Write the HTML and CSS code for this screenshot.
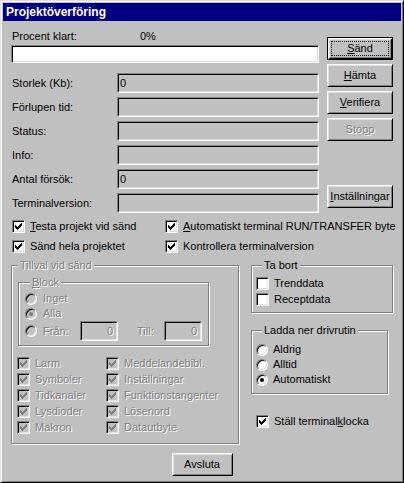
FILE: index.html
```html
<!DOCTYPE html>
<html lang="sv">
<head>
    <meta charset="UTF-8">
    <meta name="viewport" content="width=device-width, initial-scale=1.0">
    <title>Projektöverföring</title>
    <link rel="stylesheet" href="styles.css">
</head>
<body>
    <svg class="defs" width="0" height="0">
        <symbol id="tick" viewBox="0 0 7 7">
            <path d="M6 0h1v1H6zM5 1h2v1H5zM0 2h1v1H0zM4 2h3v1H4zM0 3h2v1H0zM3 3h3v1H3zM0 4h5v1H0zM1 5h3v1H1zM2 6h1v1H2z"/>
        </symbol>
    </svg>

    <div class="window">
        <div class="titlebar">Projektöverföring</div>

        <div class="content">
            <div class="top">
                <div class="main">
                    <div class="progress-head">
                        <span class="progress-label">Procent klart:</span>
                        <span>0%</span>
                    </div>
                    <div class="progress sunken"></div>

                    <div class="fields">
                        <span class="field-label">Storlek (Kb):</span>
                        <div class="field sunken">0</div>
                        <span class="field-label">Förlupen tid:</span>
                        <div class="field sunken"></div>
                        <span class="field-label">Status:</span>
                        <div class="field sunken"></div>
                        <span class="field-label">Info:</span>
                        <div class="field sunken"></div>
                        <span class="field-label">Antal försök:</span>
                        <div class="field sunken">0</div>
                        <span class="field-label">Terminalversion:</span>
                        <div class="field sunken"></div>
                    </div>
                </div>

                <div class="actions">
                    <button class="btn btn-default"><u>S</u>änd</button>
                    <button class="btn"><u>H</u>ämta</button>
                    <button class="btn"><u>V</u>erifiera</button>
                    <button class="btn" disabled>Sto<u>p</u>p</button>
                    <button class="btn btn-settings"><u>I</u>nställningar</button>
                </div>
            </div>

            <div class="options">
                <div class="check">
                    <span class="box sunken"><svg><use href="#tick"/></svg></span>
                    <span><u>T</u>esta projekt vid sänd</span>
                </div>
                <div class="check">
                    <span class="box sunken"><svg><use href="#tick"/></svg></span>
                    <span><u>A</u>utomatiskt terminal RUN/TRANSFER byte</span>
                </div>
                <div class="check">
                    <span class="box sunken"><svg><use href="#tick"/></svg></span>
                    <span>Sänd hela projektet</span>
                </div>
                <div class="check">
                    <span class="box sunken"><svg><use href="#tick"/></svg></span>
                    <span>Kontrollera terminalversion</span>
                </div>
            </div>

            <div class="lower">
                <fieldset class="group tillval disabled">
                    <legend>Tillval vid sänd</legend>

                    <fieldset class="group block">
                        <legend><u>B</u>lock</legend>
                        <div class="radio-row">
                            <span class="radio sunken"></span>
                            <span>Inget</span>
                        </div>
                        <div class="radio-row">
                            <span class="radio sunken on"></span>
                            <span>Alla</span>
                        </div>
                        <div class="radio-row range-row">
                            <span class="radio sunken"></span>
                            <span class="from-label">Från:</span>
                            <div class="field field-small sunken">0</div>
                            <span class="to-label">Till:</span>
                            <div class="field field-small sunken">0</div>
                        </div>
                    </fieldset>

                    <div class="items">
                        <div class="check item">
                            <span class="box sunken"><svg><use href="#tick"/></svg></span>
                            <span>Larm</span>
                        </div>
                        <div class="check item">
                            <span class="box sunken"><svg><use href="#tick"/></svg></span>
                            <span>Meddelandebibl.</span>
                        </div>
                        <div class="check item">
                            <span class="box sunken"><svg><use href="#tick"/></svg></span>
                            <span>Symboler</span>
                        </div>
                        <div class="check item">
                            <span class="box sunken"><svg><use href="#tick"/></svg></span>
                            <span>Inställningar</span>
                        </div>
                        <div class="check item">
                            <span class="box sunken"><svg><use href="#tick"/></svg></span>
                            <span>Tidkanaler</span>
                        </div>
                        <div class="check item">
                            <span class="box sunken"><svg><use href="#tick"/></svg></span>
                            <span>Funktionstangenter</span>
                        </div>
                        <div class="check item">
                            <span class="box sunken"><svg><use href="#tick"/></svg></span>
                            <span>Lysdioder</span>
                        </div>
                        <div class="check item">
                            <span class="box sunken"><svg><use href="#tick"/></svg></span>
                            <span>Lösenord</span>
                        </div>
                        <div class="check item">
                            <span class="box sunken"><svg><use href="#tick"/></svg></span>
                            <span>Makron</span>
                        </div>
                        <div class="check item">
                            <span class="box sunken"><svg><use href="#tick"/></svg></span>
                            <span>Datautbyte</span>
                        </div>
                    </div>
                </fieldset>

                <div class="side">
                    <fieldset class="group tabort">
                        <legend>Ta bort</legend>
                        <div class="check item">
                            <span class="box sunken"></span>
                            <span>Trenddata</span>
                        </div>
                        <div class="check item">
                            <span class="box sunken"></span>
                            <span>Receptdata</span>
                        </div>
                    </fieldset>

                    <fieldset class="group driver">
                        <legend>Ladda ner drivrutin</legend>
                        <div class="radio-row">
                            <span class="radio sunken"></span>
                            <span>Aldrig</span>
                        </div>
                        <div class="radio-row">
                            <span class="radio sunken"></span>
                            <span>Alltid</span>
                        </div>
                        <div class="radio-row">
                            <span class="radio sunken on"></span>
                            <span>Automatiskt</span>
                        </div>
                    </fieldset>

                    <div class="check clock">
                        <span class="box sunken"><svg><use href="#tick"/></svg></span>
                        <span>Ställ terminal<u>k</u>locka</span>
                    </div>
                </div>
            </div>

            <div class="footer">
                <button class="btn btn-close">Avsluta</button>
            </div>
        </div>
    </div>
</body>
</html>
```

FILE: styles.css
```css
body {
    font-family: "Liberation Sans", Arial, sans-serif;
    font-size: 11px;
    line-height: 13px;
    color: #000;
    background-color: #c0c0c0;
    margin: 0;
    padding: 0;
}

.defs {
    display: block;
    width: 0;
    height: 0;
    overflow: hidden;
}

/* Window frame */
.window {
    width: 404px;
    height: 483px;
    box-sizing: border-box;
    padding: 2px;
    background-color: #c0c0c0;
    border: 1px solid;
    border-color: #dfdfdf #000 #000 #dfdfdf;
    box-shadow: inset 1px 1px #fff, inset -1px -1px #808080;
}

.titlebar {
    height: 18px;
    line-height: 18px;
    padding-left: 3px;
    background-color: #000080;
    color: #fff;
    font-size: 12px;
    font-weight: bold;
}

.content {
    padding: 9px 8px 0 8px;
}

/* Sunken 3D edge used by fields, boxes and radios */
.sunken {
    box-sizing: border-box;
    border: 1px solid;
    border-color: #808080 #fff #fff #808080;
    box-shadow: inset 1px 1px #000, inset -1px -1px #dfdfdf;
}

/* Top part */
.top {
    display: grid;
    grid-template-columns: 308px 66px;
    column-gap: 8px;
}

.progress-head {
    display: flex;
    padding-left: 1px;
}

.progress-label {
    width: 128px;
}

.progress {
    height: 18px;
    margin-top: 2px;
    background-color: #fff;
}

.fields {
    display: grid;
    grid-template-columns: 106px 202px;
    grid-auto-rows: 20px;
    row-gap: 4px;
    margin-top: 10px;
    align-items: center;
}

.field-label {
    padding-left: 1px;
}

.field {
    height: 20px;
    line-height: 18px;
    padding: 0 2px;
    background-color: #c0c0c0;
}

.actions {
    display: flex;
    flex-direction: column;
    gap: 4px;
    padding-top: 7px;
}

/* Buttons */
.btn {
    position: relative;
    width: 66px;
    height: 23px;
    padding: 0;
    font: inherit;
    color: #000;
    background-color: #c0c0c0;
    border: 1px solid;
    border-color: #fff #000 #000 #fff;
    box-shadow: inset 1px 1px #dfdfdf, inset -1px -1px #808080;
}

.btn:disabled {
    color: #808080;
    text-shadow: 1px 1px 0 #fff;
}

.btn-default {
    border-color: #000;
    box-shadow: inset 1px 1px #fff, inset -1px -1px #000, inset 2px 2px #dfdfdf, inset -2px -2px #808080;
}

.btn-default::after {
    content: "";
    position: absolute;
    inset: 3px;
    border: 1px dotted #000;
}

.btn-settings {
    margin-top: 40px;
}

.btn-close {
    width: 61px;
}

/* Checkboxes */
.options {
    display: grid;
    grid-template-columns: 153px 1fr;
    grid-auto-rows: 20px;
    margin-top: 3px;
    padding-left: 1px;
}

.check {
    display: flex;
    align-items: center;
    gap: 5px;
    white-space: nowrap;
}

.box {
    flex: none;
    display: flex;
    align-items: center;
    justify-content: center;
    width: 13px;
    height: 13px;
    background-color: #fff;
}

.box svg {
    display: block;
    width: 7px;
    height: 7px;
    fill: currentColor;
    shape-rendering: crispEdges;
}

/* Radio buttons */
.radio-row {
    display: flex;
    align-items: center;
    gap: 6px;
    height: 15px;
}

.radio {
    flex: none;
    display: flex;
    align-items: center;
    justify-content: center;
    width: 12px;
    height: 12px;
    border-radius: 50%;
    border-color: #808080 #fff #fff #808080;
    background-color: #fff;
}

.radio.on::after {
    content: "";
    width: 4px;
    height: 4px;
    border-radius: 50%;
    background-color: currentColor;
}

/* Group boxes */
.group {
    margin: 0;
    padding: 0;
    min-inline-size: 0;
    border: 1px solid #808080;
    box-shadow: inset 1px 1px #fff, 1px 1px 0 #fff;
}

.group legend {
    padding: 0 2px;
    margin-left: 6px;
    line-height: 13px;
    background-color: #c0c0c0;
}

.disabled {
    color: #808080;
    text-shadow: 1px 1px 0 #fff;
}

.disabled .box,
.disabled .radio {
    background-color: #c0c0c0;
}

.lower {
    display: flex;
    align-items: flex-start;
    gap: 12px;
    margin-top: 3px;
}

.tillval {
    box-sizing: border-box;
    width: 228px;
    padding: 0 0 8px 0;
}

.block {
    box-sizing: border-box;
    width: 191px;
    margin: 4px 0 0 6px;
    padding: 2px 0 4px 6px;
}

.block legend {
    margin-left: 5px;
}

.range-row {
    height: 20px;
}

.from-label {
    width: 31px;
}

.to-label {
    width: 21px;
    margin-left: 13px;
}

.field-small {
    width: 38px;
    text-align: right;
    padding-right: 4px;
    color: #808080;
}

.items {
    display: grid;
    grid-template-columns: 89px 1fr;
    grid-auto-rows: 16px;
    margin: 9px 0 0 5px;
}

.item {
    height: 16px;
}

.side {
    display: flex;
    flex-direction: column;
    width: 142px;
}

.tabort {
    box-sizing: border-box;
    padding: 3px 0 5px 4px;
}

.driver {
    box-sizing: border-box;
    width: 137px;
    margin-top: 11px;
    padding: 5px 0 6px 4px;
}

.driver .radio-row {
    gap: 5px;
}

.clock {
    margin: 21px 0 0 5px;
    height: 13px;
}

.footer {
    display: flex;
    justify-content: center;
    margin-top: 9px;
}
```
